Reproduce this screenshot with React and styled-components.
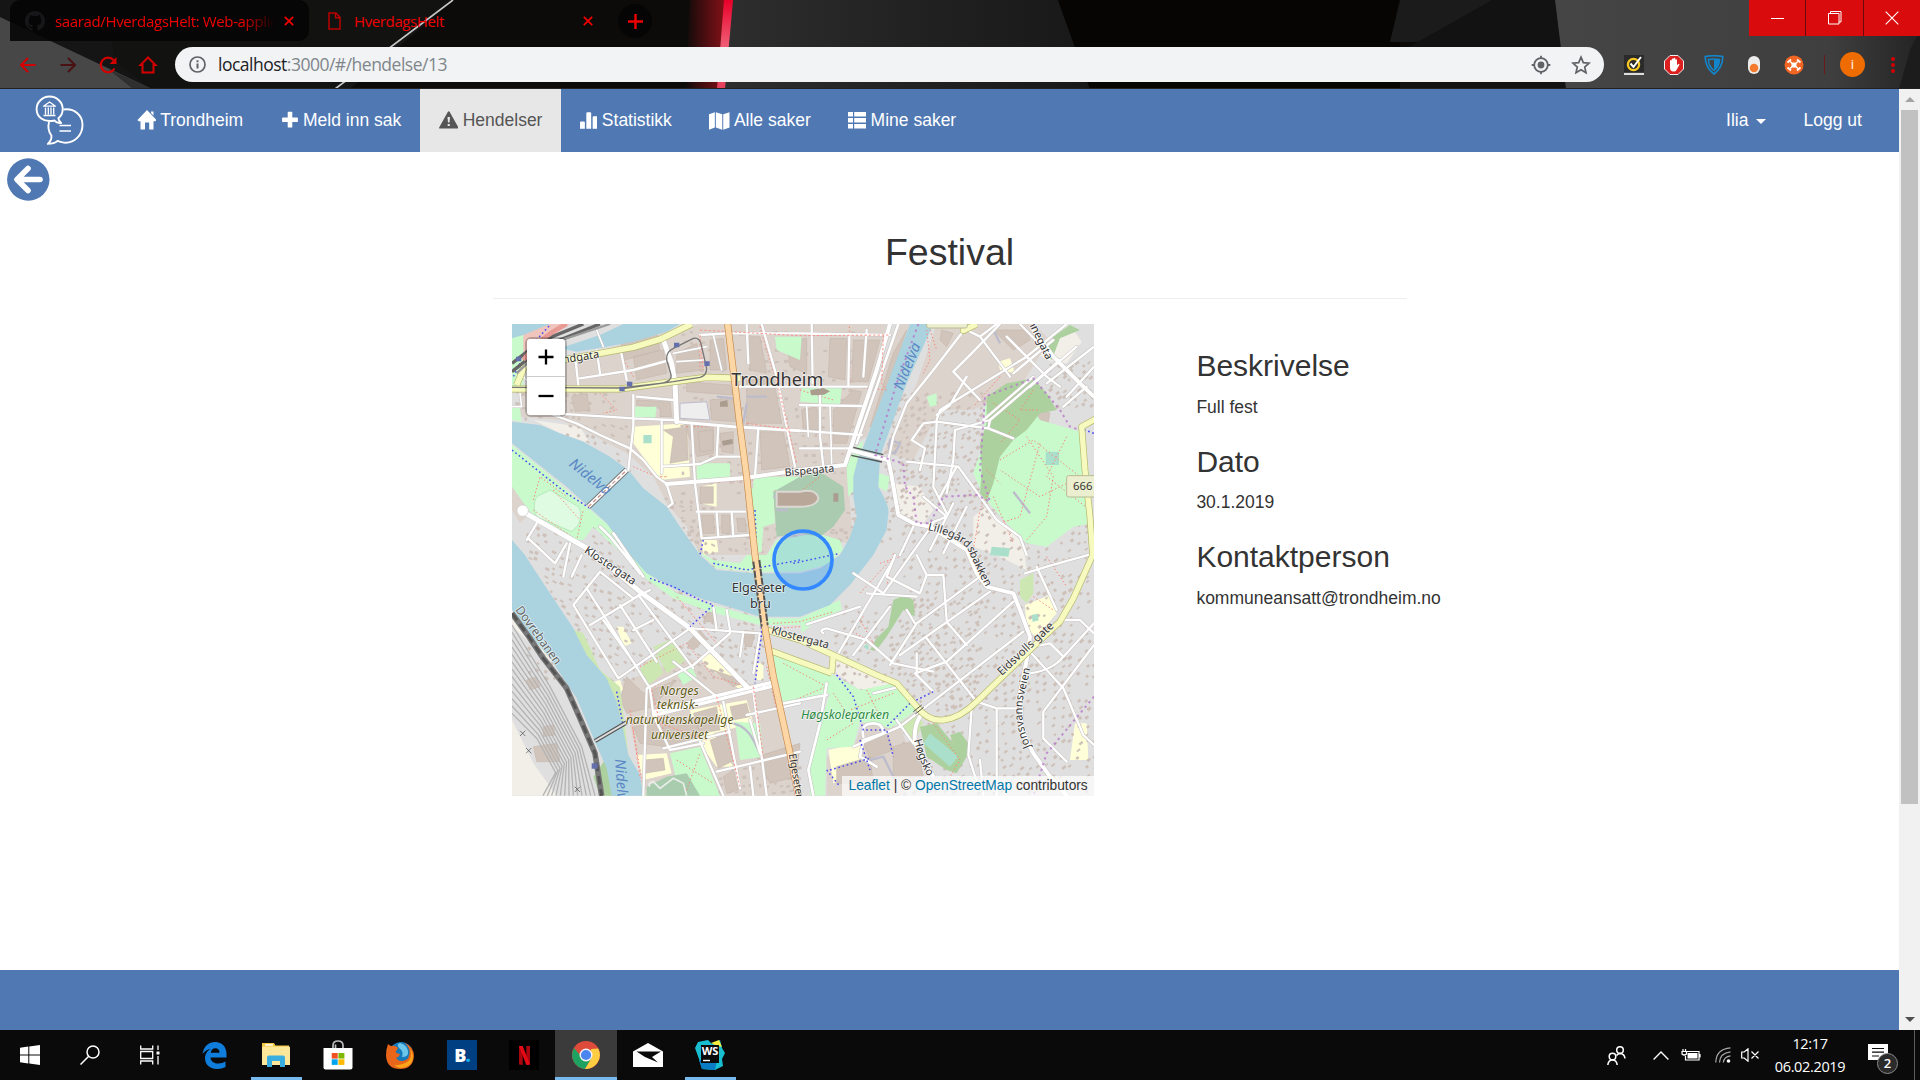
import React from "react";
import styled, { createGlobalStyle } from "styled-components";

const GlobalStyle = createGlobalStyle`
  * { box-sizing: border-box; }
  html, body { margin: 0; padding: 0; overflow: hidden; }
`;

const ui = `"Open Sans", "Noto Sans", sans-serif`;
const arial = `"Liberation Sans", Arial, sans-serif`;
const BLUE = "#5078b3";

const Desktop = styled.div`
  width: 1920px;
  height: 1080px;
  display: flex;
  flex-direction: column;
  overflow: hidden;
  background: #fff;
`;

/* ---------- browser chrome ---------- */

const Chrome = styled.header`
  position: relative;
  height: 89px;
  flex: none;
  display: flex;
  flex-direction: column;
  background: #0c0b0a;
  overflow: hidden;
  font-family: ${ui};
`;
const ThemeArt = styled.svg`
  position: absolute;
  inset: 0;
`;
const TabStrip = styled.div`
  position: relative;
  height: 42px;
  flex: none;
  display: flex;
  padding-left: 10px;
`;
const Tab = styled.div`
  display: flex;
  align-items: center;
  width: ${(p) => p.$width}px;
  height: 41px;
  padding: 0 15px 0 ${(p) => p.$left}px;
  border-radius: 10px 10px 10px 0;
  background: ${(p) => (p.$idle ? "rgba(4,4,4,.88)" : "transparent")};
  color: #f00000;
  font-size: 15px;
`;
const TabTitle = styled.span`
  flex: 1;
  overflow: hidden;
  white-space: nowrap;
  letter-spacing: ${(p) => p.$track}px;
  margin-left: ${(p) => p.$gap}px;
  margin-right: 9px;
  ${(p) => p.$fade && "-webkit-mask-image: linear-gradient(90deg,#000 85%,transparent); mask-image: linear-gradient(90deg,#000 85%,transparent);"}
`;
const NewTab = styled.div`
  width: 34px;
  height: 34px;
  margin: 4px 0 0 10px;
  border-radius: 50%;
  background: #050505;
  display: grid;
  place-items: center;
`;
const WindowButtons = styled.div`
  display: flex;
  gap: 1px;
  height: 36px;
  margin-left: auto;
  background: #6b0a0a;
`;
const WindowButton = styled.div`
  width: ${(p) => p.$width}px;
  background: #d90b0c;
  display: grid;
  place-items: center;
`;
const Toolbar = styled.div`
  position: relative;
  height: 47px;
  display: flex;
  align-items: flex-start;
  padding: 5px 0 0 0;
`;
const NavIcons = styled.div`
  width: 175px;
  height: 35px;
  display: flex;
  align-items: center;
  gap: 16px;
  padding-left: 16px;
`;
const Omnibox = styled.div`
  width: 1429px;
  height: 35px;
  border-radius: 18px;
  background: #f1f3f4;
  display: flex;
  align-items: center;
  padding: 0 13px 0 14px;
`;
const Url = styled.div`
  flex: 1;
  margin-left: 12px;
  padding-bottom: 2px;
  font-size: 17.5px;
  line-height: 32px;
  letter-spacing: -0.5px;
  color: #80868b;
  b { font-weight: 400; color: #202124; }
`;
const OmniActions = styled.div`
  display: flex;
  gap: 20px;
`;
const Extensions = styled.div`
  flex: 1;
  height: 35px;
  display: flex;
  align-items: center;
  gap: 20px;
  padding-left: 20px;
`;
const Divider = styled.i`
  width: 1px;
  height: 19px;
  background: #6a1a1a;
`;
const Avatar = styled.div`
  width: 25px;
  height: 25px;
  margin-left: -5px;
  border-radius: 50%;
  background: #ee6c02;
  color: #fff;
  font-size: 13px;
  line-height: 24px;
  text-align: center;
`;

/* ---------- page ---------- */

const Viewport = styled.div`
  flex: 1;
  min-height: 0;
  display: flex;
`;
const Page = styled.div`
  width: 1899px;
  display: flex;
  flex-direction: column;
  font-family: ${arial};
  font-size: 17.5px;
  line-height: 25px;
  color: #333;
`;
const Navbar = styled.nav`
  height: 63px;
  flex: none;
  display: flex;
  background: ${BLUE};
  padding-right: 18.4px;
`;
const Brand = styled.div`
  width: 118.4px;
  padding: 6px 0 0 35px;
`;
const NavItem = styled.a`
  display: flex;
  align-items: center;
  gap: ${(p) => p.$gap ?? 4.4}px;
  padding: 0 18.75px;
  color: ${(p) => (p.$active ? "#555" : "#fff")};
  background: ${(p) => (p.$active ? "#e7e7e7" : "transparent")};
  white-space: nowrap;
`;
const Spacer = styled.div`
  flex: 1;
`;
const Caret = styled.i`
  margin-top: 2px;
  border: 5px solid transparent;
  border-top-color: #fff;
  border-bottom: 0;
`;
const Main = styled.main`
  flex: 1;
  display: flex;
  flex-direction: column;
`;
const BackRow = styled.div`
  height: 80px;
  padding: 6px 0 0 7px;
`;
const Content = styled.section`
  width: 914px;
  margin-left: 492.5px;
`;
const Title = styled.h2`
  margin: 0;
  height: 67px;
  border-bottom: 1px solid #eee;
  font-weight: 400;
  font-size: 37.5px;
  line-height: 41.25px;
  text-align: center;
`;
const Columns = styled.div`
  display: flex;
  padding: 25px 0 0 19.5px;
`;
const MapBox = styled.div`
  position: relative;
  width: 582px;
  height: 472px;
  flex: none;
  overflow: hidden;
  background: #e0dfdf;
  svg { display: block; }
`;
const ZoomControl = styled.div`
  position: absolute;
  left: 13px;
  top: 12.5px;
  border: 2.5px solid rgba(0, 0, 0, 0.22);
  border-radius: 6px;
  background-clip: padding-box;
`;
const ZoomButton = styled.div`
  width: 38px;
  height: 38px;
  background: #fff;
  display: grid;
  place-items: center;
  border-bottom: ${(p) => (p.$first ? "1px solid #ccc" : "0")};
  border-radius: ${(p) => (p.$first ? "3px 3px 0 0" : "0 0 3px 3px")};
`;
const Attribution = styled.div`
  position: absolute;
  right: 0;
  bottom: 0;
  height: 20px;
  padding: 0 6.25px;
  background: rgba(255, 255, 255, 0.7);
  font-size: 13.75px;
  line-height: 19px;
  white-space: nowrap;
  a { color: #0078a8; }
`;
const Details = styled.div`
  margin-left: 102.4px;
  padding-top: 25px;
`;
const Heading = styled.h3`
  margin: 0 0 12.5px;
  font-weight: 400;
  font-size: 30px;
  line-height: 33px;
`;
const Text = styled.p`
  margin: 0 0 25px;
`;
const Footer = styled.footer`
  height: 60px;
  background: ${BLUE};
`;
const Scrollbar = styled.div`
  width: 21px;
  background: #f1f1f1;
  display: flex;
  flex-direction: column;
  align-items: center;
`;
const ScrollArrow = styled.div`
  height: 21px;
  display: grid;
  place-items: center;
`;
const ScrollThumb = styled.div`
  width: 17px;
  height: 694px;
  background: #c1c1c1;
  margin-bottom: auto;
`;

/* ---------- taskbar ---------- */

const Taskbar = styled.footer`
  height: 50px;
  flex: none;
  display: flex;
  background: #0a0a0b;
  color: #fff;
  font-family: ${ui};
`;
const TaskButton = styled.div`
  width: ${(p) => p.$width ?? 62}px;
  margin-right: ${(p) => p.$gapAfter ?? 0}px;
  display: grid;
  place-items: center;
  background: ${(p) => (p.$focused ? "#3b3b3c" : "transparent")};
  box-shadow: ${(p) => (p.$focused ? "inset 0 -3px #76b9ed" : "none")};
`;
const RunningTask = styled(TaskButton)`
  background: linear-gradient(#76b9ed, #76b9ed) center bottom / 51px 3px no-repeat;
`;
const Tile = styled.div`
  width: 30px;
  height: 30px;
  display: grid;
  place-items: center;
  background: ${(p) => p.$bg};
  color: #fff;
  font: 700 18px/30px ${ui};
  letter-spacing: -1px;
  span { color: #16b1ef; }
`;
const Tray = styled.div`
  margin-left: auto;
  display: flex;
  align-items: center;
`;
const TrayIcon = styled.div`
  width: ${(p) => p.$width}px;
  display: flex;
  justify-content: center;
`;
const Clock = styled.div`
  width: 90px;
  text-align: center;
  font-size: 14.5px;
  line-height: 23px;
  letter-spacing: -0.35px;
  padding-bottom: 1px;
`;
const Notifications = styled.div`
  position: relative;
  width: 31px;
  height: 31px;
  margin: 9px 15px 0 13px;
`;
const Count = styled.div`
  position: absolute;
  left: 9px;
  top: 9px;
  width: 21px;
  height: 21px;
  border: 1px solid #8a8a8a;
  border-radius: 50%;
  background: #2b2b2c;
  font: 600 13px/19px ${ui};
  text-align: center;
`;
const DesktopEdge = styled.div`
  width: 6px;
  height: 50px;
  border-left: 1px solid #5c5c5c;
`;

/* ---------- icons ---------- */

const Ic = ({ w, h = w, vb, children, ...r }) => (
  <svg width={w} height={h} viewBox={vb || `0 0 ${w} ${h}`} fill="none" {...r}>{children}</svg>
);

const CloseX = () => (
  <Ic w={10}><path d="M.8.8l8.4 8.4M9.2.8L.8 9.2" stroke="#f00000" strokeWidth="1.8" /></Ic>
);

const Logo = () => (
  <Ic w={50} h={52} stroke="#fff" strokeWidth="1.9" strokeLinejoin="round">
    <path d="M27.7 14c0 4.200-1.900 7.300-4.300 9.200.1 2 1 3.300 2.700 4.800-3 .2-5.200-.7-6.600-2.500C8 28 1.600 21.500 1.600 14a13 12.400 0 0 1 26.100 0z" />
    <path d="M28.500 14.500C39.500 13 47.500 20 47.500 30S39.500 48.600 29 47.600c-2.700-.3-5-1-6.500-1.700-2.500 2.300-6 3-9.700 3 2.800-2.400 4-5.200 3.600-8.400-3-4-3.700-8.300-2.400-13.500" />
    <path d="M24.500 30.500h11.500M24.500 36h11.500" strokeWidth="1.700" />
    <path d="M8.500 11.200L14.500 7l6 4.200zM8.500 20.500h12M10.500 12.500v7M13.300 12.500v7M16 12.500v7M18.700 12.500v7" strokeWidth="1.3" />
  </Ic>
);

const HomeGlyph = () => (
  <Ic w={19} h={22} vb="-1 0 19 22"><path d="M9 0l9.500 10-1 1.200h-2V19.500h-4.300v-7H7v7H2.500v-8.300H.5L-.5 10zM13 1.500h2.500v4L13 3z" fill="#fff" /></Ic>
);
const PlusGlyph = () => (
  <Ic w={18} h={20} vb="1 0 18 20"><path d="M8.300.8h3.400q.6 0 .6.600v5h5q.6 0 .6.600v3.400q0 .6-.6.600h-5v5q0 .6-.6.600H8.300q-.6 0-.6-.6v-5h-5q-.6 0-.6-.6V7q0-.6.600-.6h5v-5q0-.6.600-.6z" fill="#fff" /></Ic>
);
const WarnGlyph = () => (
  <Ic w={19.5} h={20} vb="0 0 20 20"><path fillRule="evenodd" d="M10 0q.6 0 1 .7l8.700 15.700q.6 1.200-.6 1.200H.9q-1.200 0-.6-1.200L9 .7Q9.400 0 10 0zM8.700 6l.5 5.500h1.600l.5-5.500zM8.900 13v2.200h2.200V13z" fill="#555" /></Ic>
);
const StatsGlyph = () => (
  <Ic w={17.5} h={18} vb="0 0 18 18"><path d="M0 10.500q0-1 1-1h3q1 0 1 1V17H0zM6.500 1q0-1 1-1h3q1 0 1 1v16h-5zM13 5q0-1 1-1h3q1 0 1 1v12h-5z" fill="#fff" /></Ic>
);
const MapGlyph = () => (
  <Ic w={20.5} h={18} vb="0 0 21 18"><path d="M0 2.200L6 0v15.600L0 18zM7 0l6.600 2.200V18L7 15.600zM14.600 2.200L21 0v15.600L14.600 18z" fill="#fff" /></Ic>
);
const ListGlyph = () => (
  <Ic w={18} h={17}><path d="M0 0h5v4.600H0zM6.200 0H18v4.600H6.200zM0 6h5v4.600H0zM6.200 6H18v4.600H6.200zM0 12h5v4.600H0zM6.200 12H18v4.600H6.200z" fill="#fff" /></Ic>
);

/* ---------- map ---------- */
/* Map units are a third of a pixel; the tile origin is (36, 42). */

const riverMain =
  "M36 335L120 345L180 370L250 395L330 440L385 480L430 535L500 590L540 650L600 735L650 780L760 790L900 790L960 775L1020 735L1050 680L1070 620L1060 560L1060 500L1075 440L1090 410L1230 42L1300 42L1220 220L1140 440L1135 530Q1170 590 1165 610L1160 660L1120 735L1050 825L990 885L900 920L780 920L700 895L600 865L520 835L440 790L390 735L320 640L260 585L200 530L130 475L36 400Z";
const riverWest =
  "M36 690L75 735L110 790L160 865L220 955L260 1035L320 1105L350 1175L365 1235L385 1335L420 1395L430 1457L335 1457L320 1375L285 1295L260 1235L230 1165L190 1105L150 1045L90 975L36 900Z";

const green = [
  "M36 405L130 480L260 590L330 650L400 740L455 800L530 850L640 885L780 925L900 925L900 945L780 945L630 905L520 865L430 800L370 735L280 650L250 690L200 690L100 620L36 530Z",
  "M590 720L650 775L760 785L900 785L980 765L1030 720L1020 690L950 670L830 690L800 735L740 735L720 760L640 750Z",
  "M400 290L470 290L465 330L400 325Z", "M590 460L690 460L690 505L590 510Z",
  "M825 80L905 80L900 150L830 120Z", "M905 230L1025 235L1020 285L900 275Z",
  "M750 535L820 530L825 640L790 650L785 725L765 730Z",
  "M1455 290L1480 245L1560 230L1620 330L1740 365L1770 500L1775 640L1720 650L1640 710L1580 700L1520 640L1450 560L1420 490L1450 400Z",
  "M815 1035L1000 1095L1080 1140L1180 1120L1250 1200L1170 1255L1080 1235L1060 1310L980 1315L975 1457L930 1457L930 1350L960 1240L990 1150L850 1180Z",
  "M510 1330L600 1310L660 1457L540 1457Z", "M705 1235L780 1240L790 1340L720 1350Z",
  "M36 42L70 42L70 230L36 240Z", "M36 290L60 295L65 335L36 330Z",
  "M530 1090L575 1070L590 1100L550 1125Z", "M900 925L1020 870L1025 900L940 940L905 970Z",
  "M1060 420L1090 390L1070 530L1045 560L1040 470Z", "M1135 490L1170 500L1160 545L1135 530Z",
  "M1280 260L1310 250L1310 285L1290 290Z", "M760 500L900 500L900 560L830 600L830 540L760 540Z",
];
const forest = [
  "M1460 260L1520 220L1600 205L1640 250L1670 300L1620 310L1580 360L1540 390L1500 440L1480 520L1460 575L1440 550L1445 480L1440 400L1460 340Z",
  "M1110 1020L1130 985L1165 950L1180 870L1215 855L1240 870L1245 920L1210 900L1160 980L1130 1020Z",
  "M1260 1250L1310 1240L1360 1300L1350 1275L1380 1265L1405 1300L1400 1340L1370 1390L1340 1380L1280 1340Z",
  "M1635 130L1660 80L1710 45L1740 60L1680 85L1655 150Z",
  "M325 1335L345 1350L360 1457L300 1457L280 1400Z",
];
const meadow = [
  "M220 960L250 970L300 1080L360 1130L385 1330L440 1457L425 1457L385 1330L345 1170L270 1060Z",
  "M420 1075L470 1035L490 1090L440 1130Z", "M460 1010L510 990L560 1050L500 1090Z",
  "M1560 810L1600 790L1600 850L1580 880L1560 860Z", "M1200 1240L1250 1205L1270 1240L1240 1300Z",
];
const cathedralPark = "M820 545L900 500L960 485L1030 530L1035 600L1000 650L960 680L900 670L830 680Z";
const town = [
  "M60 260L130 170L520 60L600 42L1160 42L1130 190L1040 460L1060 700L830 680L800 735L600 735L560 650L500 580L460 500L380 430L250 360L180 330L60 320Z",
  "M1190 42L1230 42L1100 380L1060 400ZM1310 42L1600 42L1650 90L1560 230L1420 300L1320 300L1240 450L1150 430L1250 220Z",
  "M360 1120L560 1040L740 1120L820 1130L860 1300L900 1457L440 1457Z",
  "M1090 1240L1200 1250L1260 1400L1200 1457L980 1457L980 1340L1060 1310Z", "M36 530L105 520L120 580L60 640L36 600Z",
];
const sand = [
  "M36 1230L100 1360L170 1457L36 1457Z", "M1180 520L1260 530L1300 600L1270 640L1200 610Z",
  "M1420 620L1460 590L1570 700L1580 780L1500 740L1420 710Z", "M100 330L240 350L270 400L180 370Z",
  "M1000 1040L1080 1060L1180 1130L1080 1140L1010 1090Z", "M1600 120L1720 60L1745 95L1700 160L1640 150Z",
  "M36 80L80 60L85 100L36 130Z", "M36 880L75 950L160 1060L36 950Z",
];
const campus = [
  "M400 350L560 340L570 500L480 510L400 400Z", "M600 530L650 520L650 590L600 580Z", "M410 1335L500 1330L515 1390L430 1410Z",
  "M570 1200L740 1170L760 1240L640 1270L700 1370L650 1370L590 1290Z", "M600 1040L640 1030L740 1115L730 1145L620 1070Z",
  "M985 1320L1080 1300L1090 1390L1000 1420Z", "M1575 885L1650 855L1670 910L1610 980L1580 960Z",
  "M350 950L370 950L395 1000L370 1010Z", "M1725 1240L1760 1240L1765 1350L1710 1350Z", "M605 690L650 690L655 725L610 735Z",
  "M330 1120L360 1110L370 1140L345 1155Z", "M770 1060L790 1060L790 1110L770 1110Z", "M1495 155L1530 145L1545 190L1500 180Z",
];
const blocks = [
  "M360 95L470 70L480 120L375 150ZM400 140L490 120L500 190L410 210ZM530 130L590 100L610 180L530 190ZM630 90L670 85L680 180L630 180ZM560 215L690 225L700 255L560 245ZM550 340L640 350L640 430L590 440",
  "M740 210L820 205L845 340L740 340ZM745 80L780 80L800 190L750 180ZM860 90L920 85L920 190L870 170ZM990 85L1040 85L1035 210L985 200ZM1060 90L1140 90L1105 215L1055 215ZM1060 240L1085 245L1040 400L1000 400L1000 300Z",
  "M410 270L510 275L515 320L480 320L480 295L410 285ZM215 260L260 250L270 300L225 305ZM630 270L700 265L710 335L635 330ZM490 360L560 350L565 450L510 460L520 380ZM595 365L640 360L640 420L600 425ZM660 370L700 365L700 430L665 425Z",
  "M780 365L850 365L870 470L785 480ZM905 300L950 290L960 360L910 360ZM600 530L640 530L640 580L600 580ZM605 615L640 615L645 670L610 670ZM665 615L690 615L690 670L665 670ZM710 625L735 625L740 665L715 665ZM820 560L880 550L885 600L825 600Z",
  "M530 1110L430 1150L380 1100L360 1170L380 1210L460 1190ZM400 1250L590 1220L600 1290L500 1310L420 1300ZM430 1350L490 1345L495 1380L435 1390ZM580 1210L650 1190L660 1260L600 1270ZM690 1190L740 1180L750 1220L700 1230ZM630 1290L690 1270L705 1350L655 1375Z",
  "M640 1080L740 1115L700 1130ZM1090 1300L1160 1270L1180 1320L1110 1345ZM1010 1370L1110 1340L1120 1420L1010 1420ZM1180 1310L1250 1290L1270 1400L1180 1400ZM1220 60L1190 150L1160 230L1120 360L1110 350L1180 130ZM1325 60L1360 70L1340 110L1320 90Z",
  "M560 1000L600 960L620 985L580 1020ZM730 960L765 965L755 1010L735 1010ZM620 910L650 890L645 935L610 935ZM1480 60L1580 60L1590 90L1540 120ZM1620 280L1650 310L1640 360L1610 350ZM770 1340L900 1300L890 1400L810 1420ZM670 1400L700 1380L715 1440L680 1450Z",
  "M100 1310L170 1300L180 1355L110 1355ZM130 1250L160 1245L165 1275L130 1280ZM80 1110L110 1100L120 1130L90 1140Z",
];
const roads = [
  [7, "M160 315L230 340L300 375L390 415L430 450L470 500L500 522L518 580L505 590M400 255L400 350L385 480M165 310L400 325L520 330M485 335L485 490M575 345L585 520L605 685L750 675M485 470L600 462L650 440L655 350M655 440L730 440M590 605L735 605M650 610L655 680M695 605L700 680"],
  [7, "M600 75L680 70L900 70L1170 75M785 42L830 200L860 350L885 470M775 355L765 500M360 110L380 210M225 135L235 225M290 120L300 190M240 205L400 180L510 150M410 260L520 270M740 42L745 160M900 362L1085 375M900 285L1085 288M960 230L960 380L970 470M1048 80L1045 225M720 230L1100 230M1100 60L1090 200M935 42L938 220M900 415L1050 415"],
  [5, "M60 250L65 290L36 290M70 200L180 320M520 130L620 110M530 155L610 150M290 60L310 110M920 290L925 380M990 290L995 460M640 75L665 180"],
  [7, "M1165 450L1180 380L1220 280L1300 180L1385 70L1400 60M1235 390L1270 340L1310 335L1465 355L1540 385M1235 390L1275 415L1260 480M1310 340L1300 530L1340 610M1310 330L1320 300L1580 140L1700 42M1310 315L1350 285L1400 200M1465 355L1470 330L1540 270L1680 150M1365 360L1360 450L1340 550M1220 455L1375 470L1440 560L1490 630L1560 680L1580 735"],
  [7, "M1360 185L1440 270M1440 80L1530 200M1400 60L1440 80L1490 42M1360 185L1420 125L1500 42M1520 80L1640 200L1680 230M1560 42L1650 135M1540 190L1660 90M1590 230L1730 110M1640 220L1782 110M1470 330L1365 360M1270 560L1340 620L1290 640M1450 330L1600 200M1700 260L1782 170M1690 290L1760 230M1370 470L1320 560M1400 590L1330 730M1360 580L1290 720M1240 650L1200 735"],
  [7, "M920 943L1080 890M970 970Q955 960 980 955L1100 990L1180 1060L1300 1085M1015 1030L1180 750M1060 1035L1170 890M1060 790L1150 850L1300 640M1170 1065L1250 940L1440 800M1340 930L1330 795L1280 795L1250 735M1340 935L1400 1005M1280 985L1430 1175M1245 1090L1300 1145M1200 1250L1570 965M1540 875L1340 1055L1245 1090M1470 845L1200 1035M1430 1175L1490 1195L1550 1195M1490 1195L1490 1457M1415 1195L1405 1335L1430 1415M1590 1025L1690 1135L1750 1275L1782 1305M1782 1005L1630 1205L1630 1285L1700 1355M1590 1090Q1660 1080 1690 1040L1782 940M1575 790L1640 770L1782 730M1610 770L1670 900"],
  [7, "M1185 735L1160 800L1260 850L1280 795M1100 850L1250 860M1220 900L1245 940M1250 1030L1250 1085M1120 1150L1200 1130M1190 1230L1240 1300M1060 1310L1200 1250M1450 1457L1440 1350M1690 1040L1650 1000L1600 1010M1690 930L1740 930L1782 970"],
  [7, "M220 885L300 785L400 865L450 840M270 945L420 855M220 885L355 1105M260 835L450 1135L460 1215M310 930L410 1070M360 885L470 1055M415 855L580 1075M355 1105L570 955M440 1135L580 1065L690 970M580 955L780 970M730 965L720 1040M780 970L760 1090M490 1315L690 1265M650 1385L900 1325M670 1175L720 1435M760 1145L800 1457M600 1295L670 1457M750 1370L760 1457M400 960L460 930M80 690L110 640M85 685L165 760L200 700M210 700L190 800M245 735L215 800M520 1055L650 1160M640 890L650 960M680 900L690 960M460 1215L510 1320L610 1300M440 1135L430 1457M740 1215L900 1180M750 1230L780 1330"],
  [8, "M980 1120L960 1240L925 1380L940 1457M850 1180L980 1155M1090 1280Q1080 1240 1120 1240Q1150 1240 1150 1270L1090 1290L1080 1340L1130 1370M300 650L330 680L420 790M340 670L430 800"],
  [12, "M1170 42L1130 180L1050 420L1035 465L900 480L740 503L500 522"],
  [8, "M1195 42L1130 230L1070 400"],
  [15, "M490 90L515 160L525 220L530 335M60 600L270 720L420 845L570 955L745 1135"],
  [9, "M530 335L700 350L900 362"],
  [12, "M1050 420L1165 450L1175 500L1195 615L1240 640L1290 650L1400 720L1430 790L1460 830L1540 850L1560 900L1590 980L1580 1050L1560 1150L1565 1260L1600 1330L1650 1400L1700 1457M1600 60L1660 140L1740 220L1782 260M1260 1220Q1240 1250 1245 1300L1300 1400"],
  [22, "M470 1208L745 1140L820 1122"],
];
const footways =
  "M600 90L600 180M1048 50L1050 230L1160 240M780 50L820 190M560 350L720 350M590 520L760 510M100 600L230 690L250 600M100 570L120 500L200 560M1580 380L1660 500L1640 620L1580 690M1500 450L1600 390L1740 500L1620 560L1500 480M1620 400L1560 620L1500 640M1700 380L1640 500L1770 600M1480 560L1540 700M1420 720L1440 600L1470 540M480 1220L500 1300M400 1260L430 1440M420 1070L560 1000L640 1100L740 1130M540 1080L450 1140M530 1350L640 1420M560 1440L600 1330M850 1060L980 1130L860 1180M1000 1150L1060 1240L980 1290M1100 1140L1140 1220M1180 1150L1050 1200M1090 920L1050 960L1120 1000L1080 930M1140 760L1200 740M1180 730L1160 830M840 590L960 500M400 470L470 500M820 940L900 935L1000 905M830 955L900 950M300 250L350 300L310 310M1290 60L1310 120M160 540L240 630M1180 740L1080 850M1640 740L1700 830M1600 860L1660 900M800 1070L830 1200M1280 60L1290 150L1270 190M900 240L1000 270M400 200L360 130M1500 200L1420 290M1300 1240L1380 1350L1350 1400M1480 280L1560 330L1500 400M1600 240L1560 300L1620 300M1460 480L1500 520";
const cycleways =
  "M36 420L130 495L200 550L270 595M450 805L520 830L600 870L640 885L570 950M1010 1095L1060 1160L1090 1260L1160 1260L1180 1340M1300 1145L1230 1180L1160 1250M1080 1290L1110 1380M990 1380L1110 1345M765 600L770 735L785 970L765 1120M350 1145L370 1250M880 760L1020 730M640 760L740 780L900 750M980 1380L1020 1430M1740 355L1782 370M610 690L600 735M60 160L40 200M100 100L150 45";
const boundary =
  "M1255 42L1190 220L1125 435L1210 460L1215 530L1240 560L1250 640L1290 640L1330 560L1430 555L1470 575L1440 480L1455 260L1600 205L1680 300L1710 350L1740 360M1782 1160L1640 1330L1600 1457";
const rails = "M36 910L90 985L130 1045L200 1135L240 1225L285 1330L305 1457";

const yard = Array.from({ length: 13 }, (_, i) => {
  const o = i * 13;
  return `M${36} ${945 + o * 1.7}L${150 - o * 0.25} ${1130 + o}L${245 - o * 0.5} ${1310 + o * 0.5}L${285 - o} 1457`;
}).join("");

function houses() {
  let s = 11;
  const rnd = () => ((s = (s * 16807) % 2147483647) / 2147483647);
  const zones = [
    [1150, 250, 420, 380, -0.6, 19], [1200, 640, 582, 817, -0.7, 25], [1000, 880, 420, 320, -0.5, 23],
    [80, 640, 700, 470, 0.5, 24], [200, 340, 200, 130, 0.5, 25], [460, 560, 130, 140, 0.3, 25],
    [1640, 160, 142, 130, -0.7, 20], [650, 1370, 250, 87, -0.2, 23], [40, 240, 300, 80, 0.1, 24],
    [540, 60, 520, 630, -0.08, 28], [980, 600, 200, 100, 0.2, 26],
  ];
  let d = "";
  for (const [x, y, w, h, a, step] of zones) {
    for (let i = x; i < x + w; i += step) {
      for (let j = y; j < y + h; j += step) {
        if (rnd() < 0.28) continue;
        const px = i + rnd() * 12, py = j + rnd() * 12, ww = 7 + rnd() * 7, hh = 5 + rnd() * 5;
        const c = Math.cos(a), n = Math.sin(a);
        d += `M${px.toFixed(0)} ${py.toFixed(0)}l${(ww * c).toFixed(1)} ${(ww * n).toFixed(1)}l${(-hh * n).toFixed(1)} ${(hh * c).toFixed(1)}l${(-ww * c).toFixed(1)} ${(-ww * n).toFixed(1)}z`;
      }
    }
  }
  return d;
}
const houseShapes = houses();

const MapLabel = styled.text`
  font-family: "Noto Sans", "Open Sans", sans-serif;
  font-size: ${(p) => p.$size ?? 33}px;
  font-style: ${(p) => (p.$italic ? "italic" : "normal")};
  fill: ${(p) => p.$color ?? "#333"};
  stroke: ${(p) => p.$halo ?? "rgba(255,255,255,.6)"};
  stroke-width: 5px;
  stroke-linejoin: round;
  paint-order: stroke;
  text-anchor: ${(p) => p.$anchor ?? "middle"};
`;

const CityMap = () => (
  <svg width="582" height="472" viewBox="36 42 1746 1416">
    <rect x="36" y="42" width="1746" height="1416" fill="#e0dfdf" />
    <path d={sand.join("")} fill="#f2efe9" />
    <path d={town.join("")} fill="#ddd3cd" />
    <path d={campus.join("")} fill="#ffffd8" />
    <path d={houseShapes} fill="#cdc1b9" />
    <path d={blocks.join("")} fill="#d0c4bb" stroke="#c2b3a7" strokeWidth="1.5" />
    <path d="M540 280L620 275L630 330L540 325ZM480 1025L530 1005L550 1050L505 1075Z" fill="#eee" stroke="#bbc" strokeWidth="3" />
    <path d="M36 42H210L36 160Z" fill="#f0c5bd" />
    <path d={green.join("")} fill="#c8facc" />
    <path d={meadow.join("")} fill="#cde7b2" />
    <path d={forest.join("")} fill="#add19e" />
    <path d={cathedralPark} fill="#aacbaf" />
    <path d="M440 1430L500 1400L560 1390L600 1457L440 1457Z" fill="#a9cbae" />
    <path d="M110 560L150 540L235 590Q250 610 235 645L215 665L110 620Q95 590 110 560Z" fill="#dffce2" stroke="#b8e8bd" strokeWidth="3" />
    <path d="M1637 425H1677V465H1637ZM1475 710L1530 715L1525 740L1470 735ZM1270 1300L1290 1270L1375 1340L1350 1370ZM1595 915l18-4 3 20-18 5ZM430 375L455 375L455 400L430 400ZM1090 1010L1105 1000L1105 1020Z" fill="#aae0cb" />
    <path d={riverMain + riverWest} fill="#aad3df" />
    <path d="M36 42H150L70 75L36 85ZM180 115L300 75L370 42H540L500 65L400 95L320 110L230 125Z" fill="#aad3df" />
    <path d="M820 560L870 555L860 600L830 600M1480 60L1500 100M650 260L700 265M740 280L730 340M740 260L800 260M1170 390Q1160 430 1185 430L1200 400Z M700 1240Q740 1250 760 1290L790 1350M1540 545L1590 610M1110 1350L1150 1340L1190 1420" stroke="#bcbccc" strokeWidth="7" fill="none" />
    <path d={footways} stroke="#fa8072" strokeWidth="3" strokeDasharray="4 7" fill="none" />
    <path d={yard} stroke="#b4b4b4" strokeWidth="4" fill="none" />
    {roads.map(([w, d], i) => <path key={"c" + i} d={d} stroke="#c6c2c0" strokeWidth={w + 3} fill="none" strokeLinejoin="round" strokeLinecap="round" />)}
    {roads.map(([w, d], i) => <path key={"r" + i} d={d} stroke="#fff" strokeWidth={w} fill="none" strokeLinejoin="round" strokeLinecap="round" />)}
    <path d="M470 1208L745 1140L820 1122" stroke="#ddd" strokeWidth="2" strokeDasharray="16 8" />
    <circle cx="68" cy="602" r="17" fill="#fff" stroke="#ccc" strokeWidth="2" />
    <path d="M600 60L900 77L1165 75M830 210L890 460M600 75L610 180M740 340L870 358M480 500L500 500M1150 75L1145 220L1160 240M530 860L650 1000M390 1200L420 1400M650 1160L720 1430M760 1130L790 1340M455 1140L480 1240L620 1290" stroke="#fa9488" strokeWidth="3" strokeDasharray="7 6" fill="none" />
    <path d={cycleways} stroke="#4a4af0" strokeWidth="4.500" strokeDasharray="5 8" fill="none" />
    <path d={boundary} stroke="#b777cc" strokeWidth="6" strokeDasharray="7 11" fill="none" opacity=".8" />

    <g fill="none" strokeLinejoin="round">
      <g stroke="#b5b86c">
        <path d="M50 225L85 140M190 150L400 112L480 88L575 42M36 237L360 237L520 215L620 202L720 205" strokeWidth="21" />
        <path d="M1400 42L1390 62L1430 42M1790 325L1745 350L1755 480L1770 620L1778 735L1720 865L1680 935L1600 1010L1430 1175Q1380 1225 1330 1230Q1285 1235 1250 1190L1190 1120L1130 1095L1000 1035L900 990L800 960M1000 1035L995 1090M800 1018L900 1055L995 1090" strokeWidth="20" />
      </g>
      <g stroke="#f7fabf">
        <path d="M50 225L85 140M190 150L400 112L480 88L575 42M36 237L360 237L520 215L620 202L720 205" strokeWidth="17" />
        <path d="M1400 42L1390 62L1430 42M1790 325L1745 350L1755 480L1770 620L1778 735L1720 865L1680 935L1600 1010L1430 1175Q1380 1225 1330 1230Q1285 1235 1250 1190L1190 1120L1130 1095L1000 1035L900 990L800 960M1000 1035L995 1090M800 1018L900 1055L995 1090" strokeWidth="16" />
      </g>
      <path d="M683 42L720 350L740 500L765 735L790 925L820 1100L870 1330L895 1457" stroke="#c58a4c" strokeWidth="21" />
      <path d="M683 42L720 350L740 500L765 735L790 925L820 1100L870 1330L895 1457" stroke="#fcd6a4" strokeWidth="17" />
      <path d="M760 755L785 950M778 750L803 945" stroke="#555" strokeWidth="6" strokeDasharray="22 5" />
      <path d="M36 232L360 234L480 220Q520 215 512 190L500 150Q498 125 520 115L580 85Q600 80 605 110L620 175Q620 198 600 202L520 215L360 237" stroke="#777" strokeWidth="4" />
      <path d="M36 160L120 95L250 42M36 185L130 110L300 42" stroke="#666" strokeWidth="10" />
      <path d="M50 190L140 105L330 42" stroke="#999" strokeWidth="7" />
      <path d="M70 150Q120 80 200 42" stroke="#e99a94" strokeWidth="14" />
      <path d={rails} stroke="#777" strokeWidth="17" />
      <path d={rails} stroke="#555" strokeWidth="9" strokeDasharray="26 14" />
      <path d="M265 590L380 480" stroke="#777" strokeWidth="18" />
      <path d="M265 590L380 480" stroke="#fff" strokeWidth="12" />
      <path d="M265 590L380 480" stroke="#c9958d" strokeWidth="4" strokeDasharray="12 8" />
      <path d="M285 1293L380 1237" stroke="#555" strokeWidth="13" />
      <path d="M285 1293L380 1237" stroke="#ddd" strokeWidth="6" />
      <path d="M1060 412L1150 434M1054 436L1146 456" stroke="#555" strokeWidth="4" />
      <path d="M1240 1205L1265 1185M1246 1212L1271 1192" stroke="#555" strokeWidth="3" />
    </g>
    <path d="M522 98h16v14h-16zM613 154h16v14h-16zM381 215h16v14h-16zM358 230h16v14h-16zM48 140h16v14h-16zM275 1360h18v16h-18z" fill="#6470ab" />
    <path d="M60 1262l16 16M76 1262l-16 16M78 1314l16 16M94 1314l-16 16M224 1430l16 16M240 1430l-16 16" stroke="#444" strokeWidth="2" />
    <path d="M830 545H900Q950 535 955 565Q950 590 900 590H830Z" fill="#b9a79a" stroke="#dcd8d4" strokeWidth="6" />
    <path d="M660 275l22-5 2 20-24 0zM930 240l40-6 20 10-18 10-38 2zM665 393l32-6 2 14-30 6zM1000 550h15v25h-15z" fill="#ab9c90" />
    <path d="M450 1430Q440 1420 460 1415L480 1435L520 1405L550 1420L560 1457" fill="none" stroke="#e8eee8" strokeWidth="5" />

    <g fill="#ecefcf" stroke="#b9bb94" strokeWidth="3">
      <rect x="1280" y="20" width="122" height="34" rx="6" />
      <rect x="1700" y="497" width="120" height="64" rx="6" />
    </g>
    <MapLabel $size={34} x="1719" y="541" $anchor="start" $halo="none">666</MapLabel>

    <defs>
      <path id="lille" d="M1282 660Q1370 680 1402 715Q1425 770 1472 860" />
      <path id="jons" d="M1592 1310Q1556 1230 1571 1160L1605 1020" />
      <path id="hog" d="M1242 1290Q1265 1390 1325 1457" />
      <path id="eids" d="M1505 1098L1620 990L1690 925" />
    </defs>
    <MapLabel $size={54} x="832" y="227">Trondheim</MapLabel>
    <MapLabel transform="translate(190 160) rotate(-9)" $anchor="start">ndgata</MapLabel>
    <MapLabel $size={32} transform="translate(929 492) rotate(-5)">Bispegata</MapLabel>
    <MapLabel $italic $size={44} $color="#5b86c4" $halo="none" transform="translate(262 512) rotate(39)">Nidelva</MapLabel>
    <MapLabel $italic $size={44} $color="#5b86c4" $halo="none" transform="translate(1235 174) rotate(-68)">Nidelva</MapLabel>
    <MapLabel $italic $size={44} $color="#5b86c4" $halo="none" $anchor="start" transform="translate(345 1348) rotate(86)">Nidelv</MapLabel>
    <MapLabel transform="translate(325 776) rotate(34)">Klostergata</MapLabel>
    <MapLabel transform="translate(898 993) rotate(15)">Klostergata</MapLabel>
    <MapLabel $size={36} $color="#666" transform="translate(106 983) rotate(54)">Dovrebanen</MapLabel>
    <MapLabel $size={38} x="778" y="845">Elgeseter</MapLabel>
    <MapLabel $size={38} x="781" y="895">bru</MapLabel>
    <MapLabel $size={31} $anchor="start" transform="translate(866 1333) rotate(80)">Elgeseter</MapLabel>
    <MapLabel $anchor="start" transform="translate(1583 35) rotate(64)">nnegata</MapLabel>
    <MapLabel $anchor="start"><textPath href="#lille">Lillegårdsbakken</textPath></MapLabel>
    <MapLabel $anchor="start"><textPath href="#jons">Jonsvannsveien</textPath></MapLabel>
    <MapLabel $anchor="start"><textPath href="#hog">Høgsko</textPath></MapLabel>
    <MapLabel $size={34} $anchor="start"><textPath href="#eids">Eidsvolls gate</textPath></MapLabel>
    <MapLabel $italic $size={37} $color="#2f8a46" x="1035" y="1228">Høgskoleparken</MapLabel>
    <MapLabel $italic $size={37} $color="#5f5b16" x="538" y="1154">Norges</MapLabel>
    <MapLabel $italic $size={37} $color="#5f5b16" x="533" y="1198">teknisk-</MapLabel>
    <MapLabel $italic $size={37} $color="#5f5b16" x="539" y="1243">naturvitenskapelige</MapLabel>
    <MapLabel $italic $size={37} $color="#5f5b16" x="539" y="1288">universitet</MapLabel>

    <circle cx="909" cy="750" r="87" fill="#3388ff" fillOpacity=".2" stroke="#3388ff" strokeWidth="11" />
  </svg>
);

export default function App() {
  return (
    <Desktop>
      <GlobalStyle />
      <Chrome>
        <ThemeArt width="1920" height="89" viewBox="0 0 1920 89">
          <defs>
            <linearGradient id="steel" x1="0" x2="1"><stop offset="0" stopColor="#2e2e2e" /><stop offset=".5" stopColor="#222" /><stop offset="1" stopColor="#181818" /></linearGradient>
            <linearGradient id="glow" x1="0" x2="1"><stop offset="0" stopColor="#a01018" stopOpacity="0" /><stop offset="1" stopColor="#8e1218" /></linearGradient>
            <linearGradient id="beam" x1="0" x2="0" y1="0" y2="1"><stop offset="0" stopColor="#e8002a" /><stop offset=".5" stopColor="#ef5a72" /><stop offset="1" stopColor="#e5405c" /></linearGradient>
            <linearGradient id="slate" x1="0" x2="1"><stop offset="0" stopColor="#454545" /><stop offset=".75" stopColor="#3f3f3f" /><stop offset="1" stopColor="#242424" /></linearGradient>
          </defs>
          <path d="M0 0H453L350 89H150L0 17Z" fill="#151515" />
          <path d="M105 0H453L335 89H150L115 60Z" fill="#121211" />
          <path d="M0 17L152 89H0Z" fill="#474747" />
          <path d="M108 69L152 89H133Z" fill="#2f2f2f" />
          <path d="M453 0L335 89" stroke="#c9c9c9" strokeWidth="1.6" />
          <path d="M690 0H730L720 89H685Z" fill="url(#glow)" />
          <path d="M732 0H1058L1090 89H722Z" fill="url(#steel)" />
          <path d="M1058 0H1400L1400 89H1090Z" fill="#060504" />
          <path d="M724 0H733L725 89H717Z" fill="url(#beam)" />
          <path d="M1400 0H1492L1436 42H1390Z" fill="#1b1b1b" />
          <path d="M1492 0H1555L1566 89H1400V52Z" fill="#121212" />
          <path d="M1555 0H1920V89H1566Z" fill="url(#slate)" />
          <path d="M1910 50L1920 30V89H1899Z" fill="#1c1c1c" />
          <path d="M0 88.500H1920" stroke="#222" />
        </ThemeArt>
        <TabStrip>
          <Tab $width={299} $left={15} $idle>
            <Ic w={20} vb="0 0 16 16"><path fill="#17171a" d="M8 0C3.580 0 0 3.580 0 8c0 3.540 2.290 6.530 5.470 7.590.4.070.55-.17.55-.38 0-.19-.01-.82-.01-1.490-2.010.37-2.530-.49-2.690-.94-.09-.23-.48-.94-.82-1.130-.28-.15-.68-.52-.01-.53.630-.01 1.080.58 1.230.82.72 1.210 1.870.87 2.330.66.070-.52.28-.87.51-1.070-1.780-.2-3.640-.89-3.640-3.950 0-.87.31-1.590.82-2.150-.08-.2-.36-1.020.08-2.120 0 0 .67-.21 2.200.82a7.600 7.600 0 0 1 4 0c1.530-1.040 2.200-.82 2.200-.82.440 1.100.16 1.920.08 2.120.51.56.82 1.270.82 2.150 0 3.070-1.870 3.750-3.650 3.950.29.25.54.73.54 1.480 0 1.070-.01 1.930-.01 2.200 0 .21.15.46.55.38A8 8 0 0 0 16 8c0-4.420-3.580-8-8-8z" /></Ic>
            <TabTitle $gap={10} $track={-0.36} $fade>saarad/HverdagsHelt: Web-applic</TabTitle>
            <CloseX />
          </Tab>
          <Tab $width={299} $left={19}>
            <Ic w={13} h={18}><path d="M1 1h7l4 4.200V17H1zM7.500 1v4.700H12" stroke="#b00" strokeWidth="1.5" /></Ic>
            <TabTitle $gap={13} $track={-0.38}>HverdagsHelt</TabTitle>
            <CloseX />
          </Tab>
          <NewTab><Ic w={15}><path d="M7.500 0v15M0 7.500h15" stroke="#f00000" strokeWidth="2.4" /></Ic></NewTab>
          <WindowButtons>
            <WindowButton $width={56}><Ic w={13} h={1}><path d="M0 .5h13" stroke="#fff" /></Ic></WindowButton>
            <WindowButton $width={57}><Ic w={14}><path d="M.5 2.500h10.500v10.500H.5zM2.500 2.500v-2h10.500v10.500h-2" stroke="#fff" /></Ic></WindowButton>
            <WindowButton $width={56}><Ic w={14}><path d="M.7.7l12.600 12.600M13.300.7L.7 13.300" stroke="#fff" strokeWidth="1.1" /></Ic></WindowButton>
          </WindowButtons>
        </TabStrip>
        <Toolbar>
          <NavIcons>
            <Ic w={24}><path d="M19.500 12H5M12 5l-7 7 7 7" stroke="#d40000" strokeWidth="2" /></Ic>
            <Ic w={24}><path d="M4.500 12H19M12 5l7 7-7 7" stroke="#4a1212" strokeWidth="2" /></Ic>
            <Ic w={24}><path d="M18.500 15.500A7.300 7.300 0 1 1 17.500 7" stroke="#d40000" strokeWidth="2.200" /><path d="M20.500 4v7h-7z" fill="#d40000" /></Ic>
            <Ic w={24}><path d="M6.500 19.500V12H4.500L12 4.500l7.500 7.500h-2v7.500z" stroke="#d40000" strokeWidth="2" /></Ic>
          </NavIcons>
          <Omnibox>
            <Ic w={17}><circle cx="8.500" cy="8.500" r="7.500" stroke="#5f6368" strokeWidth="1.700" /><path d="M8.500 7.500v5M8.500 4.300v1.900" stroke="#5f6368" strokeWidth="2" /></Ic>
            <Url><b>localhost</b>:3000/#/hendelse/13</Url>
            <OmniActions>
              <Ic w={20}><circle cx="10" cy="10" r="6.800" stroke="#5f6368" strokeWidth="1.800" /><circle cx="10" cy="10" r="3.400" fill="#5f6368" /><path d="M10 .7v3M10 16.300v3M.7 10h3M16.300 10h3" stroke="#5f6368" strokeWidth="1.800" /></Ic>
              <Ic w={20}><path d="M10 2.200l2.300 5.400 5.800.5-4.400 3.900 1.300 5.700-5-3-5 3 1.300-5.700L1.900 8.100l5.800-.5z" stroke="#5f6368" strokeWidth="1.700" /></Ic>
            </OmniActions>
          </Omnibox>
          <Extensions>
            <Ic w={20}><path fill="#2a2a2a" d="M0 0h20v17H0z" /><path fill="#ddd" d="M0 18h20v2H0z" /><circle cx="9.500" cy="9.500" r="5.600" stroke="#f8c822" strokeWidth="2.300" /><path d="M6.500 8.500l3 3.500L17 2" stroke="#fff" strokeWidth="2" /></Ic>
            <Ic w={20}><path d="M6 .5h8L19.500 6v8L14 19.500H6L.5 14V6z" fill="#dc1f1f" stroke="#eee" /><path d="M6 10V5.500q1-1 1.700 0V9 4q1-1.200 1.800 0v4.500V3.300q1-1 1.800 0V9 4.800q1-1 1.700 0v5.500l1.500-1.500q1.500 0 .8 1.200L12.500 15q-.5 1.500-3 1.500-3.500 0-3.500-4z" fill="#fff" /></Ic>
            <Ic w={20}><path d="M1.300 1.500q8.700-1.500 17.400 0Q19 12 10 19 1 12 1.300 1.500z" stroke="#1385ca" strokeWidth="1.700" /><path d="M4.500 4.500q5.500-.9 11 0Q15.500 11.500 10 15.500 4.500 11.500 4.500 4.500z" stroke="#1385ca" strokeWidth="1.500" /><path d="M10 4q3 0 5.500.5-.2 7-5.500 11z" fill="#1385ca" /></Ic>
            <Ic w={20}><rect x="4" y="1" width="12" height="18" rx="6" fill="#ececec" /><circle cx="10" cy="13" r="4.300" fill="#f47b2d" /></Ic>
            <Ic w={20}><circle cx="10" cy="10" r="9.500" fill="#f26522" /><path d="M6 6.500l8 7M14 6.500l-8 7" stroke="#fff" strokeWidth="1.500" /><rect x="7.500" y="7.500" width="5" height="5" rx="1.500" fill="#fff" /><path d="M3.500 7.500l3.500-3M13 4.500l3.500 3M3.500 12.500l3.500 3M16.500 12.500l-3.500 3" stroke="#fff" strokeWidth="1.700" /></Ic>
            <Divider />
            <Avatar>i</Avatar>
            <Ic w={20}><g fill="#d40000"><circle cx="8" cy="4" r="2" /><circle cx="8" cy="10" r="2" /><circle cx="8" cy="16" r="2" /></g></Ic>
          </Extensions>
        </Toolbar>
      </Chrome>

      <Viewport>
        <Page>
          <Navbar>
            <Brand><Logo /></Brand>
            <NavItem $gap={4}><HomeGlyph />Trondheim</NavItem>
            <NavItem><PlusGlyph />Meld inn sak</NavItem>
            <NavItem $active><WarnGlyph />Hendelser</NavItem>
            <NavItem><StatsGlyph />Statistikk</NavItem>
            <NavItem $gap={4}><MapGlyph />Alle saker</NavItem>
            <NavItem><ListGlyph />Mine saker</NavItem>
            <Spacer />
            <NavItem $gap={7.500}>Ilia<Caret /></NavItem>
            <NavItem>Logg ut</NavItem>
          </Navbar>
          <Main>
            <BackRow>
              <Ic w={43}><circle cx="21.300" cy="21.500" r="21.200" fill={BLUE} /><path d="M33 21.500H11.500M21 10.500l-11 11 11 11" stroke="#fff" strokeWidth="5.600" strokeLinecap="round" strokeLinejoin="round" /></Ic>
            </BackRow>
            <Content>
              <Title>Festival</Title>
              <Columns>
                <MapBox>
                  <CityMap />
                  <ZoomControl>
                    <ZoomButton $first><Ic w={16}><path d="M8 .5v15M.5 8h15" stroke="#000" strokeWidth="2.300" /></Ic></ZoomButton>
                    <ZoomButton><Ic w={16}><path d="M.5 8h15" stroke="#000" strokeWidth="2.300" /></Ic></ZoomButton>
                  </ZoomControl>
                  <Attribution><a>Leaflet</a> | © <a>OpenStreetMap</a> contributors</Attribution>
                </MapBox>
                <Details>
                  <Heading>Beskrivelse</Heading>
                  <Text>Full fest</Text>
                  <Heading>Dato</Heading>
                  <Text>30.1.2019</Text>
                  <Heading>Kontaktperson</Heading>
                  <Text>kommuneansatt@trondheim.no</Text>
                </Details>
              </Columns>
            </Content>
          </Main>
          <Footer />
        </Page>
        <Scrollbar>
          <ScrollArrow><Ic w={10} h={5}><path d="M0 5l5-5 5 5z" fill="#a3a3a3" /></Ic></ScrollArrow>
          <ScrollThumb />
          <ScrollArrow><Ic w={10} h={5}><path d="M0 0l5 5 5-5z" fill="#505050" /></Ic></ScrollArrow>
        </Scrollbar>
      </Viewport>

      <Taskbar>
        <TaskButton $width={60}><Ic w={20}><path d="M0 2.800l8.300-1.200v8H0zM9.300 1.400L20 0v9.600H9.300zM0 10.500h8.300v8L0 17.300zM9.300 10.500H20V20L9.300 18.600z" fill="#fff" /></Ic></TaskButton>
        <TaskButton $width={60}><Ic w={20}><circle cx="13" cy="7" r="6" stroke="#fff" strokeWidth="1.500" /><path d="M8.700 11.300L.5 19.500" stroke="#fff" strokeWidth="1.500" /></Ic></TaskButton>
        <TaskButton $width={60} $gapAfter={3}><Ic w={20}><path d="M.7.500v3.500h12V.5M.7 19.500V16h12v3.500M.7 6.500h12v7H.7zM18 .5V5M18 11v8.500" stroke="#fff" strokeWidth="1.300" /><path d="M16.500 6.500h3v3h-3z" fill="#fff" /></Ic></TaskButton>
        <TaskButton><Ic w={25} h={27}><path d="M.5 12C1.500 4 7 0 13 0c7.500 0 11.500 5.500 11.500 12v3.500H8.500c.3 4 3.700 6 8 6 2.600 0 5-.7 7-2v5.500c-2.400 1.300-5 2-8.300 2C8 27 3 22.800 3 16.300c0-4.200 2.300-7.500 5.700-9.300C5.300 7.500 2.300 9.300.5 12zM8.700 10.700h8.800c0-3-1.500-4.500-4.200-4.500-2.500 0-4 1.700-4.600 4.500z" fill="#0f7ddb" /></Ic></TaskButton>
        <RunningTask><Ic w={28} h={24}><path d="M0 0h12l1.500 2.500H27V22H0z" fill="#f2c63f" /><path d="M1 3.500h26q1 0 1 1V22H0V4.500q0-1 1-1z" fill="#ffe79a" /><path d="M3 1.200h8v1.500H3z" fill="#fff" /><path d="M5 24v-9.500q0-2 2-2h14q2 0 2 2V24h-5v-6h-8v6z" fill="#3aaee0" /></Ic></RunningTask>
        <TaskButton><Ic w={30}><path d="M10 9V5.500Q10 1 15 1t5 4.500V9M12.500 9V4.500" stroke="#bbb" strokeWidth="1.700" /><path d="M.5 8h29v19.500q0 2-2 2h-25q-2 0-2-2z" fill="#fff" /><path d="M8.700 13h6v5.600h-6z" fill="#f25022" /><path d="M15.400 13h6v5.600h-6z" fill="#7fba00" /><path d="M8.700 19.300h6v5.600h-6z" fill="#00a4ef" /><path d="M15.400 19.300h6v5.600h-6z" fill="#ffb900" /></Ic></TaskButton>
        <TaskButton><Ic w={28}><circle cx="15" cy="13" r="12" fill="#1679b9" /><path d="M14 2Q21 4 22 10T16 16Q18 10 13 7Q10 3 14 2z" fill="#6bc6ea" /><path d="M2 3Q4 5 5.500 5 9 4 12 7L9.500 11q2 2 4.500 2-1 3.500-4 3.500 2 4 6.500 3.500 8-1 7-11Q22 5 19 2q9 4 9 13-1 13-14 13T0 15Q0 8 2 3z" fill="#e8651a" /><path d="M24 8q3 9-3 13T8 24q3 3 7 3 12-1 12-12 0-4-3-7z" fill="#f9a419" /></Ic></TaskButton>
        <TaskButton><Tile $bg="#003f81"><b>B<span>.</span></b></Tile></TaskButton>
        <TaskButton><Tile $bg="#000"><Ic w={11} h={19}><path d="M0 0h3.700v19L0 18.500zM7.300 0H11v18.500l-3.700.5z" fill="#a9060f" /><path d="M0 0h3.700L11 18.500l-3.700.5z" fill="#e50914" /></Ic></Tile></TaskButton>
        <TaskButton $focused>
          <Ic w={28}><circle cx="14" cy="14" r="14" fill="#de4b3b" /><path d="M2 7A14 14 0 0 0 13 28L19.500 17 14 14H8z" fill="#1da261" /><path d="M26.200 7.500A14 14 0 0 1 13 28l6.500-11L19 8z" fill="#fecd42" /><circle cx="14" cy="14" r="6.500" fill="#f5f5f5" /><circle cx="14" cy="14" r="5.100" fill="#4a86ee" /></Ic>
        </TaskButton>
        <TaskButton><Ic w={30} h={24}><path d="M0 8.500L15 0l15 8.500V24H0z" fill="#fff" /><path d="M3.500 8.500H28L19 14l6 5.500L12 14z" fill="#0a0a0b" /></Ic></TaskButton>
        <RunningTask><Ic w={30}><path d="M3 2L13 0l4 4L25 0l2 8 3 5-3 6 1 7-8 4-13-1-3-10L0 8z" fill="#19bdd0" /><path d="M16 3l8-3 3 7-7-2z" fill="#f3ee3d" /><path d="M4 20l18 0-2 10-13-1z" fill="#087cc5" /><path d="M6 5h18v18H6z" fill="#0a0a0a" /><path d="M8 20.500h7" stroke="#fff" strokeWidth="1.400" /><text x="15" y="15" textAnchor="middle" fontSize="11" fontWeight="700" fontFamily="Open Sans, sans-serif" fill="#fff">WS</text></Ic></RunningTask>

        <Tray>
          <TrayIcon $width={40}><Ic w={19}><g stroke="#fff" strokeWidth="1.500"><circle cx="13" cy="4" r="3.300" /><circle cx="5.500" cy="10.500" r="3.300" /><path d="M.8 19q.5-5 4.700-5t4.700 5M9.500 9.500Q11 7.500 13 7.500q4.500.3 5 5" /></g></Ic></TrayIcon>
          <TrayIcon $width={49}><Ic w={16} h={9}><path d="M.6 8.500L8 1l7.400 7.500" stroke="#fff" strokeWidth="1.300" /></Ic></TrayIcon>
          <TrayIcon $width={12}><Ic w={20} h={14} style={{ flex: "none" }}><path d="M3.500 3.500h14.500v8.500H4.500V8M19 6v3.500M1 3.500h4.500v2.500q-2.200 2-4.500 0zM2 1v2M4.500 1v2" stroke="#fff" strokeWidth="1.200" /><path d="M6.500 5h10v5.500h-10z" fill="#fff" /></Ic></TrayIcon>
          <TrayIcon $width={51}><Ic w={16}><path d="M.8 15.500Q1 2 15.500.8M4.500 15.500Q5 6 15.500 4.800M8.300 15.500Q9 9.500 15.500 8.800" stroke="#aaa" strokeWidth="1.200" /><circle cx="13.500" cy="14" r="1.800" fill="#fff" /></Ic></TrayIcon>
          <TrayIcon $width={4}><Ic w={18} h={14} style={{ flex: "none" }}><path d="M.7 4h2.500L7 .8v12.400L3.200 10H.7zM10.500 3.500l7 7M17.500 3.500l-7 7" stroke="#fff" strokeWidth="1.200" /></Ic></TrayIcon>
          <TrayIcon $width={13} />
          <Clock>12:17<br />06.02.2019</Clock>
          <Notifications>
            <Ic w={21} h={18}><path d="M0 0h20v16h-8l-4 0H0z" fill="#fff" /><path d="M4 4.500h12M4 8.200h12M4 12h7" stroke="#0a0a0b" strokeWidth="1.200" /></Ic>
            <Count>2</Count>
          </Notifications>
          <DesktopEdge />
        </Tray>
      </Taskbar>
    </Desktop>
  );
}
